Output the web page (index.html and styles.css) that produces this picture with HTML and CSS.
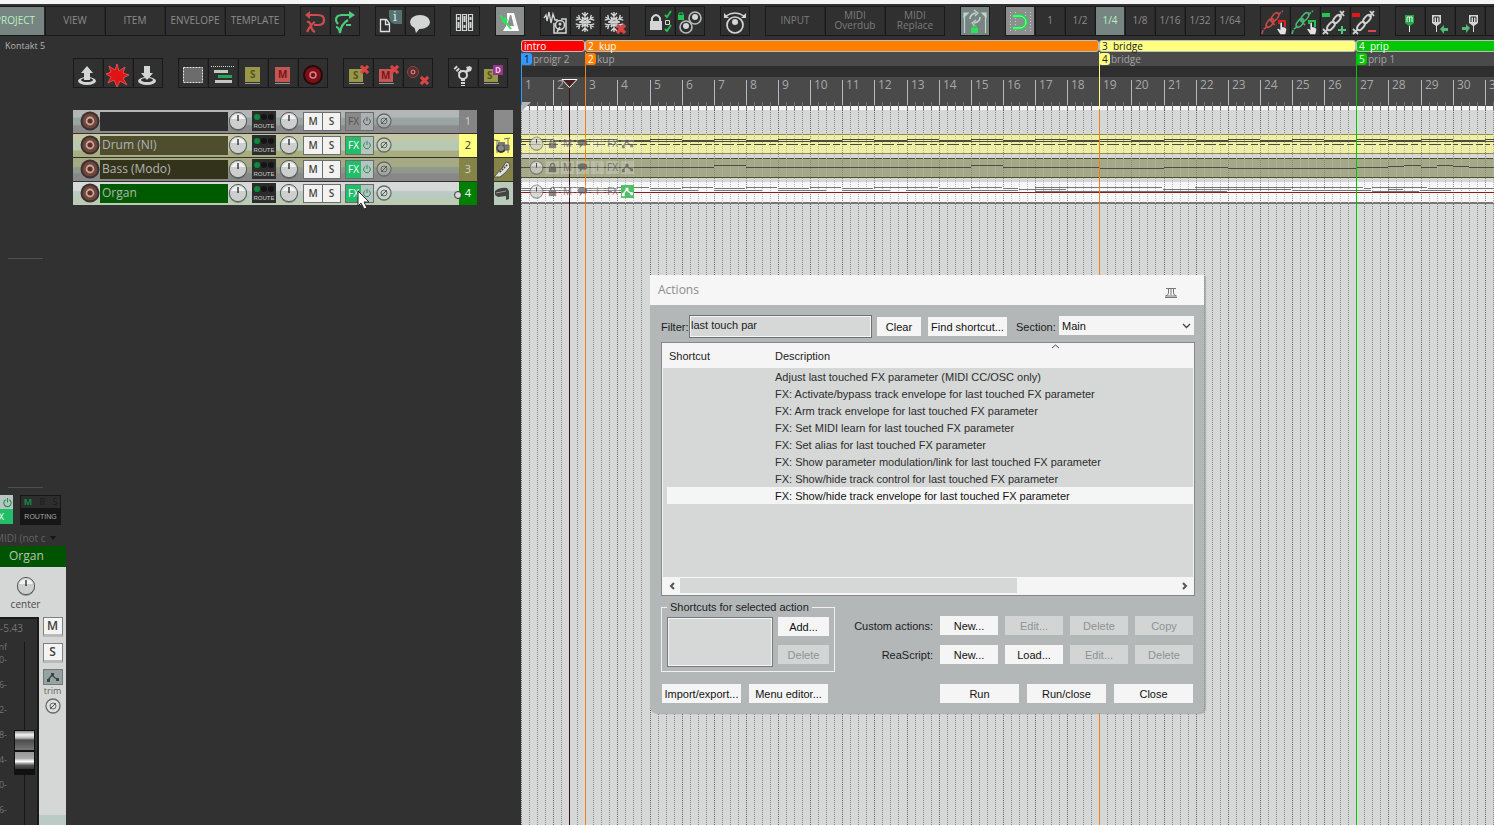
FILE: index.html
```html
<!DOCTYPE html>
<html lang="en">
<head>
    <meta charset="UTF-8">
    <meta name="viewport" content="width=device-width, initial-scale=1.0">
    <title>Reaper</title>
    <link rel="stylesheet" href="styles.css">
</head>
<body>
    <svg class="defs" aria-hidden="true">
        <symbol id="snow" viewBox="0 0 30 30">
            <g id="flake" stroke="#d4d6d6" stroke-width="1.4" fill="none">
                <g id="arm"><path d="M15 15V5M12 6l3 3 3-3M12 10l3 3 3-3"/></g>
                <use href="#arm" transform="rotate(60 15 15)"/>
                <use href="#arm" transform="rotate(120 15 15)"/>
                <use href="#arm" transform="rotate(180 15 15)"/>
                <use href="#arm" transform="rotate(240 15 15)"/>
                <use href="#arm" transform="rotate(300 15 15)"/>
            </g>
        </symbol>
        <symbol id="cross" viewBox="0 0 10 10">
            <path d="M1 1l8 8M9 1l-8 8" stroke="#d94545" stroke-width="3.4"/>
        </symbol>
        <symbol id="chain" viewBox="0 0 30 30">
            <path d="M2 27c1-5 3-6 6-8M18 8c2-2 3-3 5-4" fill="none" stroke="currentColor" stroke-width="1.6" stroke-dasharray="4 1"/>
            <g fill="none" stroke="currentColor" stroke-width="1.6">
                <ellipse cx="10" cy="16" rx="5" ry="2.6" transform="rotate(-50 10 16)"/>
                <ellipse cx="15" cy="10" rx="5" ry="2.6" transform="rotate(-50 15 10)"/>
                <path d="M9 12l6 6"/>
            </g>
        </symbol>
        <symbol id="chain2" viewBox="0 0 30 30">
            <path d="M3 27l5-5M24 4l-5 6M3 22l5 5M20 4l4 5" fill="none" stroke="#cfd1d1" stroke-width="1.8"/>
            <g fill="none" stroke="#cfd1d1" stroke-width="2">
                <ellipse cx="11" cy="19" rx="5" ry="2.6" transform="rotate(-50 11 19)"/>
                <ellipse cx="17" cy="12" rx="5" ry="2.6" transform="rotate(-50 17 12)"/>
            </g>
        </symbol>
        <symbol id="hand" viewBox="0 0 12 16">
            <path d="M4 1q1-1 2 0v5l4 1q2 1 1 4l-1 4H4L0 9q1-2 4 1z" fill="#e2e4e4"/>
        </symbol>
        <symbol id="knob" viewBox="0 0 20 20">
            <circle cx="10" cy="11" r="9" fill="#222" opacity=".4"/>
            <circle cx="10" cy="10" r="8.6" fill="#cdcfcf" stroke="#5c5c5c"/>
            <path d="M3 8a7.500 7.500 0 0 1 14 0z" fill="#f0f1f1"/>
            <path d="M10 4v6" stroke="#222" stroke-width="1.3"/>
        </symbol>
        <symbol id="phase" viewBox="0 0 18 18">
            <circle cx="9" cy="9" r="7" fill="#fff" fill-opacity=".2" stroke="#686b6b" stroke-width="1.300"/>
            <circle cx="9" cy="9" r="3" fill="none" stroke="#666"/>
            <path d="M6 12l6-6" stroke="#555"/>
        </symbol>
        <symbol id="rec" viewBox="0 0 20 20">
            <circle cx="10" cy="10" r="9.500" fill="#3b3030"/>
            <circle cx="10" cy="10" r="7.500" fill="#70463a"/>
            <circle cx="10" cy="10" r="3.500" fill="#5a3028" stroke="#c8a89c" stroke-width="1.800"/>
        </symbol>
        <symbol id="power" viewBox="0 0 12 12">
            <path d="M4 3a4 4 0 1 0 4 0M6 1v5" fill="none" stroke="currentColor" stroke-width="1.200"/>
        </symbol>
        <symbol id="env" viewBox="0 0 14 14">
            <path d="M2 10l4-5 3 3 3 1" fill="none" stroke="currentColor" stroke-width="1.300"/>
            <path d="M1 9h3v3H1zM5 3h3v3H5zM10 8h3v3h-3z" fill="currentColor"/>
        </symbol>
        <symbol id="lock" viewBox="0 0 14 14">
            <path d="M3 6h8v6H3z" fill="currentColor"/>
            <path d="M5 6V4q2-3 4 0v2" fill="none" stroke="currentColor" stroke-width="1.500"/>
        </symbol>
        <symbol id="bubble" viewBox="0 0 14 14">
            <path d="M2 4q5-3 10 0v4q-2 2-5 1l-3 3V9Q1 8 2 4z" fill="currentColor"/>
        </symbol>
    </svg>

    <div class="strip"></div>

    <header class="toolbar">
        <div class="group group-wide">
            <button class="tool tool-on">PROJECT</button>
            <button class="tool">VIEW</button>
            <button class="tool">ITEM</button>
            <button class="tool">ENVELOPE</button>
            <button class="tool">TEMPLATE</button>
        </div>
        <div class="group">
            <button class="tool" aria-label="Undo">
                <svg viewBox="0 0 30 30" fill="none" stroke="#d04c4c" stroke-width="2.200"><path d="M9 8h9q6 0 6 5t-6 5h-4"/><path d="M10 4L5 8l5 4z" fill="#d04c4c" stroke="none"/><path d="M7 15q3-1 4 4t4 6M15 15q-4 2-8 10"/></svg>
            </button>
            <button class="tool" aria-label="Redo">
                <svg viewBox="0 0 30 30" fill="none" stroke="#4fcb7c" stroke-width="2.200"><path d="M20 8h-8q-6 0-6 5 0 2 2 4"/><path d="M19 4l6 4-6 4z" fill="#4fcb7c" stroke="none"/><path d="M6 20q3 0 4 6 1-9 8-13M16 18h5"/></svg>
            </button>
        </div>
        <div class="group">
            <button class="tool" aria-label="Project info">
                <svg viewBox="0 0 30 30"><path d="M5.500 12.500h6l3 4v8h-9zM10.500 12.500v5h4" fill="none" stroke="#e0e2e2" stroke-width="1.300"/><path d="M14 3h13v14h-7q-6-1-6-8z" fill="#567172"/><text x="18" y="14" class="glyph-i">i</text></svg>
            </button>
            <button class="tool" aria-label="Notes">
                <svg viewBox="0 0 30 30"><ellipse cx="15" cy="15" rx="10" ry="7" fill="#d4d6d6"/><path d="M9 19l2 7 5-6z" fill="#d4d6d6"/></svg>
            </button>
        </div>
        <div class="group">
            <button class="tool" aria-label="Mixer">
                <svg viewBox="0 0 30 30" fill="none" stroke="#d4d6d6" stroke-width="1.200"><path d="M6.500 7.500h4v16h-4zM12.500 7.500h4v16h-4zM18.500 7.500h4v16h-4z"/><path d="M8.500 10v3M8.500 15v6M14.500 9v6M14.500 18v3M20.500 10v3M20.500 15v6" stroke-width="2"/></svg>
            </button>
        </div>
        <div class="group">
            <button class="tool tool-lit" aria-label="Metronome">
                <svg viewBox="0 0 30 30"><path d="M12 6h7l5 18H8l3-5 1-6z" fill="#fff"/><path d="M15 8h3l3 11h-9z" fill="#8b8f8e"/><path d="M5 8l11 14" stroke="#2fe05a" stroke-width="2"/><path d="M6 14l4-4 3 3-3 4z" fill="#2fe05a"/><path d="M17 7l3 12" stroke="#fff" stroke-width="2"/></svg>
            </button>
        </div>
        <div class="group">
            <button class="tool" aria-label="Render">
                <svg viewBox="0 0 30 30"><path d="M4 11l2-3 1 6 2-9 2 11 2-9 2 6h3" fill="none" stroke="#d4d6d6" stroke-width="1.300"/><path d="M14 16v10h12V12h-5" fill="none" stroke="#d4d6d6" stroke-width="1.500"/><circle cx="20" cy="18" r="4.500" fill="#2e2e2e" stroke="#d4d6d6" stroke-width="1.500"/><circle cx="20" cy="17" r="1.500" fill="#d4d6d6"/><path d="M17 25l3-5" stroke="#d4d6d6" stroke-width="1.500"/></svg>
            </button>
            <button class="tool" aria-label="Freeze"><svg viewBox="0 0 30 30"><use href="#snow"/></svg></button>
            <button class="tool" aria-label="Unfreeze"><svg viewBox="0 0 30 30"><use href="#snow" x="-1"/><use href="#cross" x="16" y="17" width="10" height="10"/></svg></button>
        </div>
        <div class="group">
            <button class="tool" aria-label="Lock settings">
                <svg viewBox="0 0 30 30"><path d="M5 14h12v9H5z" fill="#d4d6d6"/><path d="M7 14v-3q4-6 8 0v3" fill="none" stroke="#d4d6d6" stroke-width="2"/><path d="M20 8l2 2 4-6M20 22l2 2 4-6" fill="none" stroke="#23c552" stroke-width="1.800"/><path d="M20.500 13.500h4v4h-4z" fill="none" stroke="#d4d6d6"/></svg>
            </button>
            <button class="tool" aria-label="Grouping">
                <svg viewBox="0 0 30 30"><g fill="none" stroke="#b9bcbc" stroke-width="1.600"><circle cx="20" cy="11" r="6"/><circle cx="11" cy="20" r="6"/></g><circle cx="20" cy="10" r="3" fill="#d4d6d6"/><circle cx="11" cy="19" r="3" fill="#d4d6d6"/><path d="M3 8h6v5H3z" fill="#23c552"/><path d="M4 8V6h4v2" fill="none" stroke="#23c552"/></svg>
            </button>
        </div>
        <div class="group">
            <button class="tool" aria-label="Master">
                <svg viewBox="0 0 30 30"><circle cx="15" cy="18" r="8" fill="none" stroke="#d4d6d6" stroke-width="1.700"/><circle cx="15" cy="15" r="3" fill="#d4d6d6"/><path d="M6 9q9-6 18 0" fill="none" stroke="#d4d6d6" stroke-width="1.300"/><path d="M4 6v5h5zM26 6v5h-5z" fill="#d4d6d6"/></svg>
            </button>
        </div>
        <div class="group group-wide group-dim">
            <button class="tool">INPUT</button>
            <button class="tool">MIDI<br>Overdub</button>
            <button class="tool">MIDI<br>Replace</button>
        </div>
        <div class="group">
            <button class="tool tool-on" aria-label="Loop lock">
                <svg viewBox="0 0 30 30" fill="none" stroke="#c4d0ce" stroke-width="1.200"><path d="M4.500 26V7M25.500 26V7"/><path d="M4 6h4l-4 4zM26 6h-4l4 4z" fill="#c4d0ce"/><path d="M10 12q0-5 6-6M20 10q0 5-6 6" stroke-width="1.600"/><path d="M14 3l4 3-3 3M16 13l-4 3 3 3"/><path d="M11 21h7v5h-7z" fill="#2fe05a" stroke="none"/><path d="M13 21v-2h3v2" stroke="#2fe05a"/></svg>
            </button>
        </div>
        <div class="group">
            <button class="tool tool-lit" aria-label="Snap">
                <svg viewBox="0 0 30 30" fill="none"><path d="M5.500 5v21M10.500 5v21M20.500 5v21M25.500 5v21" stroke="#c8cccb" stroke-dasharray="1 2"/><path d="M8 9h7a6 6 0 0 1 0 12H8" stroke="#27d34f" stroke-width="4"/><path d="M8 9h7a6 6 0 0 1 0 12H8" stroke="#a9f7ba"/></svg>
            </button>
            <button class="tool">1</button>
            <button class="tool">1/2</button>
            <button class="tool tool-on">1/4</button>
            <button class="tool">1/8</button>
            <button class="tool">1/16</button>
            <button class="tool">1/32</button>
            <button class="tool">1/64</button>
        </div>
        <div class="group">
            <button class="tool red" aria-label="Unlink"><svg viewBox="0 0 30 30"><use href="#chain"/><path d="M19 17v-3h6v6" fill="none" stroke="#e02020" stroke-width="2"/><use href="#hand" x="17" y="15" width="10" height="13"/></svg></button>
            <button class="tool green" aria-label="Link"><svg viewBox="0 0 30 30"><use href="#chain"/><path d="M19 17v-3h6v6" fill="none" stroke="#23c552" stroke-width="2"/><use href="#hand" x="17" y="15" width="10" height="13"/></svg></button>
            <button class="tool" aria-label="Add link"><svg viewBox="0 0 30 30"><use href="#chain2"/><path d="M2 6h8v4H2z" fill="#23c552"/><path d="M22 19v8M18 23h8" stroke="#53c27c" stroke-width="2"/></svg></button>
            <button class="tool" aria-label="Remove link"><svg viewBox="0 0 30 30"><use href="#chain2"/><path d="M2 6h8v4H2z" fill="#e01818"/><path d="M18 24h8" stroke="#d04c4c" stroke-width="2"/></svg></button>
        </div>
        <div class="group">
            <button class="tool" aria-label="Marker"><svg viewBox="0 0 30 30"><path d="M10 8h9v8l-4 3h-1l-4-3z" fill="#23a849"/><path d="M12 15v-5h5v5M14.500 10v5M14.500 19v6" fill="none" stroke="#e8f5ea"/></svg></button>
            <button class="tool" aria-label="Previous marker"><svg viewBox="0 0 30 30"><path d="M7 8h9v8l-4 3h-1l-4-3z" fill="#d4d6d6"/><path d="M9 15v-5h5v5M11.500 10v5" fill="none" stroke="#2e2e2e"/><path d="M11.500 19v6" stroke="#d4d6d6"/><path d="M15 22l4-4v3h4v3h-4v3z" fill="#53b878"/></svg></button>
            <button class="tool" aria-label="Next marker"><svg viewBox="0 0 30 30"><path d="M14 8h9v8l-4 3h-1l-4-3z" fill="#d4d6d6"/><path d="M16 15v-5h5v5M18.500 10v5" fill="none" stroke="#2e2e2e"/><path d="M18.500 19v6" stroke="#d4d6d6"/><path d="M15 21l-4-4v3H7v3h4v3z" fill="#53b878"/></svg></button>
            <button class="tool" aria-label="Options"></button>
        </div>
    </header>

    <main class="work">
        <aside class="side">
            <p class="status">Kontakt 5</p>
            <div class="divider divider-top"></div>
            <div class="divider divider-bottom"></div>

            <div class="mixer">
                <div class="mixer-io">
                    <div class="mixer-fx">
                        <button class="mixer-power" aria-label="FX bypass"><svg viewBox="0 0 12 12"><use href="#power"/></svg></button>
                        <button class="mixer-fxbtn">FX</button>
                    </div>
                    <button class="routing"><span class="routing-led"><b>M</b> R S</span><span class="routing-name">ROUTING</span></button>
                </div>
                <p class="midi-in"><span>MIDI (not c</span> <i></i></p>
                <p class="mixer-name">Organ</p>
                <div class="pan">
                    <svg class="knob" viewBox="0 0 20 20"><use href="#knob"/></svg>
                    <p>center</p>
                </div>
                <div class="strip-body">
                    <div class="fader">
                        <p class="db">-5.43</p>
                        <div class="fader-row">
                            <ul class="scale"><li>-inf</li><li>0-</li><li>6-</li><li>12-</li><li>18-</li><li>24-</li><li>30-</li><li>36-</li></ul>
                            <input class="volume" type="range" min="0" max="100" value="36" aria-label="Volume">
                        </div>
                    </div>
                    <div class="strip-btns">
                        <button class="ms">M</button>
                        <button class="ms">S</button>
                        <button class="trim" aria-label="Envelope"><svg viewBox="0 0 14 14"><use href="#env"/></svg></button>
                        <span class="trim-name">trim</span>
                        <svg class="phase" viewBox="0 0 18 18"><use href="#phase"/></svg>
                    </div>
                </div>
            </div>
        </aside>

        <section class="tcp">
            <div class="toolbar2">
                <div class="group">
                    <button class="tool" aria-label="Upload"><svg viewBox="0 0 30 30"><ellipse cx="14" cy="22" rx="9" ry="4" fill="#d4d6d6"/><ellipse cx="14" cy="21" rx="6" ry="2" fill="#2e2e2e"/><path d="M11 21v-7H8l6-7 6 7h-3v7z" fill="#d4d6d6"/></svg></button>
                    <button class="tool" aria-label="Explode"><svg viewBox="0 0 30 30"><path d="M14 5l2 7 6-4-2 6 6 2-6 3 4 7-7-4-3 6-3-7-6 3 3-6-5-3 5-2-2-6 6 4z" fill="#e01414" stroke="#e05050"/></svg></button>
                    <button class="tool" aria-label="Download"><svg viewBox="0 0 30 30"><ellipse cx="14" cy="22" rx="9" ry="4" fill="#d4d6d6"/><ellipse cx="14" cy="21" rx="6" ry="2" fill="#2e2e2e"/><path d="M11 7h6v7h3l-6 7-6-7h3z" fill="#d4d6d6"/></svg></button>
                </div>
                <div class="group">
                    <button class="tool" aria-label="Select"><svg viewBox="0 0 30 30"><path d="M5.500 8.500h19v15h-19z" fill="#6c6c6c" stroke="#e8eaea" stroke-dasharray="2 1"/></svg></button>
                    <button class="tool" aria-label="Ripple"><svg viewBox="0 0 30 30"><path d="M3 7.500h24" stroke="#d4d6d6" stroke-dasharray="1 1"/><path d="M6 12.500h14M7 22.500h17" stroke="#c3c6c6" stroke-width="3"/><path d="M10 17.500h14" stroke="#23a552" stroke-width="3"/></svg></button>
                    <button class="tool" aria-label="Solo"><svg viewBox="0 0 30 30"><path d="M7 8h15v15H7z" fill="#99984a"/><path d="M7 24.500h15" stroke="#999"/><text x="12" y="19" class="glyph-s">S</text></svg></button>
                    <button class="tool" aria-label="Mute"><svg viewBox="0 0 30 30"><path d="M7 8h15v15H7z" fill="#c45656"/><path d="M7 24.500h15" stroke="#999"/><text x="10" y="19" class="glyph-m">M</text></svg></button>
                    <button class="tool" aria-label="Record"><svg viewBox="0 0 30 30"><circle cx="15" cy="16" r="10" fill="#260909"/><circle cx="15" cy="16" r="8" fill="#7c1018"/><circle cx="15" cy="16" r="3" fill="none" stroke="#d98088" stroke-width="1.500"/></svg></button>
                </div>
                <div class="group">
                    <button class="tool" aria-label="Clear solo"><svg viewBox="0 0 30 30"><path d="M6 10h14v13H6z" fill="#99984a"/><path d="M6 24.500h15" stroke="#999"/><text x="10" y="20" class="glyph-s">S</text><use href="#cross" x="17" y="6" width="9" height="9"/></svg></button>
                    <button class="tool" aria-label="Clear mute"><svg viewBox="0 0 30 30"><path d="M6 10h14v13H6z" fill="#c45656"/><path d="M6 24.500h15" stroke="#999"/><text x="8" y="20" class="glyph-m">M</text><use href="#cross" x="17" y="6" width="9" height="9"/></svg></button>
                    <button class="tool" aria-label="Clear record"><svg viewBox="0 0 30 30"><circle cx="10" cy="13" r="5.500" fill="#5c2a2a" stroke="#8e4848"/><circle cx="10" cy="13" r="2" fill="none" stroke="#d9a0a0"/><use href="#cross" x="17" y="17" width="9" height="9"/></svg></button>
                </div>
                <div class="group">
                    <button class="tool" aria-label="Monitor"><svg viewBox="0 0 30 30"><circle cx="15" cy="16" r="4" fill="none" stroke="#d4d6d6" stroke-width="2"/><path d="M7 8l5 5M15 20v7" stroke="#d4d6d6" stroke-width="4" stroke-dasharray="2 1"/><path d="M17 12l2-2-1-2 4-1 2 2-1 3-3 1-1 1z" fill="#d4d6d6"/></svg></button>
                    <button class="tool" aria-label="Solo defeat"><svg viewBox="0 0 30 30"><path d="M6 10h14v13H6z" fill="#99984a"/><path d="M6 24.500h15" stroke="#999"/><text x="9" y="20" class="glyph-s">S</text><path d="M15 6h10v10H15z" fill="#96368a"/><text x="17" y="14" class="glyph-d">D</text></svg></button>
                </div>
            </div>
            <div class="tracks" id="tracks"></div>
        </section>

        <section class="arrange" id="arrange">
            <div class="regions" id="regions"></div>
            <div class="markers" id="markers"></div>
            <div class="ruler-gap"></div>
            <div class="ruler" id="ruler"></div>
            <div class="lanes">
                <div class="lane"></div>
                <div class="lane lane-drum"></div>
                <div class="lane lane-bass"></div>
                <div class="lane lane-organ"></div>
            </div>
            <svg class="grid" id="grid" aria-hidden="true"></svg>
            <div class="lane-tools" id="laneTools"></div>
        </section>
    </main>

    <div class="actions" role="dialog" aria-labelledby="actionsTitle">
        <div class="actions-title">
            <span id="actionsTitle">Actions</span>
            <svg class="pin" viewBox="0 0 14 12" fill="none" stroke="#777"><path d="M2 1.500h10M1 10.500h12M4.500 2v4q0 2-3 3h11q-3-1-3-3V2M7 2v6"/></svg>
        </div>
        <div class="actions-body">
            <div class="filter-row">
                <label for="filter">Filter:</label>
                <input id="filter" class="filter" type="text" value="last touch par">
                <button class="btn btn-clear">Clear</button>
                <button class="btn btn-find">Find shortcut...</button>
                <label class="section-label" for="section">Section:</label>
                <select id="section" class="section"><option>Main</option></select>
            </div>

            <div class="list">
                <svg class="sort" viewBox="0 0 9 5"><path d="M1 4l3.500-3L8 4" fill="none" stroke="#444"/></svg>
                <table>
                    <thead>
                        <tr><th class="col-key">Shortcut</th><th>Description</th></tr>
                    </thead>
                    <tbody>
                        <tr><td></td><td>Adjust last touched FX parameter (MIDI CC/OSC only)</td></tr>
                        <tr><td></td><td>FX: Activate/bypass track envelope for last touched FX parameter</td></tr>
                        <tr><td></td><td>FX: Arm track envelope for last touched FX parameter</td></tr>
                        <tr><td></td><td>FX: Set MIDI learn for last touched FX parameter</td></tr>
                        <tr><td></td><td>FX: Set alias for last touched FX parameter</td></tr>
                        <tr><td></td><td>FX: Show parameter modulation/link for last touched FX parameter</td></tr>
                        <tr><td></td><td>FX: Show/hide track control for last touched FX parameter</td></tr>
                        <tr class="selected"><td></td><td>FX: Show/hide track envelope for last touched FX parameter</td></tr>
                    </tbody>
                </table>
                <div class="hscroll">
                    <button aria-label="Scroll left"><svg viewBox="0 0 8 10"><path d="M6 2L3 5l3 3" fill="none" stroke="#555" stroke-width="2"/></svg></button>
                    <div class="hscroll-track"><div class="hscroll-thumb"></div></div>
                    <button aria-label="Scroll right"><svg viewBox="0 0 8 10"><path d="M2 2l3 3-3 3" fill="none" stroke="#555" stroke-width="2"/></svg></button>
                </div>
            </div>

            <div class="bottom">
                <fieldset class="shortcuts">
                    <legend>Shortcuts for selected action</legend>
                    <div class="shortcut-list"></div>
                    <div class="shortcut-btns">
                        <button class="btn">Add...</button>
                        <button class="btn" disabled>Delete</button>
                    </div>
                </fieldset>
                <div class="custom">
                    <span>Custom actions:</span>
                    <button class="btn">New...</button>
                    <button class="btn" disabled>Edit...</button>
                    <button class="btn" disabled>Delete</button>
                    <button class="btn" disabled>Copy</button>
                    <span>ReaScript:</span>
                    <button class="btn">New...</button>
                    <button class="btn">Load...</button>
                    <button class="btn" disabled>Edit...</button>
                    <button class="btn" disabled>Delete</button>
                </div>
            </div>

            <div class="footer">
                <button class="btn">Import/export...</button>
                <button class="btn">Menu editor...</button>
                <button class="btn btn-run">Run</button>
                <button class="btn">Run/close</button>
                <button class="btn">Close</button>
            </div>
        </div>
    </div>

    <svg class="cursor" viewBox="0 0 13 20"><path d="M1 1v15l3-3 3 6 3-1-3-6h5z" fill="#fff" stroke="#222"/></svg>

    <script src="script.js"></script>
</body>
</html>
```

FILE: styles.css
```css
*{
    box-sizing: border-box;
    margin: 0;
    padding: 0;
}
body{
    display: flex;
    flex-direction: column;
    height: 100vh;
    overflow: hidden;
    background-color: #313131;
    color: #b4b4b4;
    font-family: "Open Sans", "Noto Sans", sans-serif;
    font-size: 11px;
}
button{
    border: none;
    font-family: inherit;
    color: inherit;
}
.defs{
    position: absolute;
    width: 0;
    height: 0;
}
.strip{
    height: 4px;
    background-color: #f5f5f5;
    flex-shrink: 0;
}

/* toolbars */
.toolbar{
    display: flex;
    flex-shrink: 0;
    gap: 15px;
    height: 36px;
    padding-top: 2px;
    margin-left: -15px;
}
.toolbar2{
    display: flex;
    gap: 15px;
    padding-top: 18px;
    margin-bottom: 22px;
}
.group{
    display: flex;
    flex-shrink: 0;
}
.tool{
    width: 30px;
    height: 30px;
    flex-shrink: 0;
    border: 1px solid #191919;
    border-right-color: #282828;
    background-color: #303030;
    color: #8c8c8c;
    font-size: 10px;
    line-height: 10px;
    white-space: nowrap;
    padding-bottom: 3px;
}
.tool:last-child{
    border-right-color: #191919;
}
.tool svg{
    display: block;
    width: 30px;
    height: 30px;
    margin: 0 -1px -2px;
}
.group-wide .tool{
    width: 60px;
}
.group-dim .tool{
    color: #7c7c7c;
}
.tool-on{
    background-color: #768482;
    color: #b9f0bf;
}
.tool-lit{
    background-color: #8b8f8e;
}
.red{
    color: #c44a4a;
}
.green{
    color: #4db574;
}
.glyph-i{
    font: 12px "DejaVu Serif", serif;
    fill: #e0eaea;
}
.glyph-s{
    font: bold 10px "Open Sans", sans-serif;
    fill: #54541a;
}
.glyph-m{
    font: bold 10px "Open Sans", sans-serif;
    fill: #7c1616;
}
.glyph-d{
    font: bold 8px "Open Sans", sans-serif;
    fill: #f0c8ec;
}

.work{
    display: flex;
    flex: 1;
    min-height: 0;
}

/* side panel */
.side{
    width: 66px;
    flex-shrink: 0;
    display: flex;
    flex-direction: column;
}
.status{
    padding-left: 5px;
    font-size: 9px;
    line-height: 12px;
    white-space: nowrap;
}
.divider{
    width: 35px;
    height: 1px;
    margin-left: 8px;
    background-color: #4e4e4e;
}
.divider-top{
    margin-top: 206px;
}
.divider-bottom{
    margin-top: auto;
}
.mixer{
    margin-top: 7px;
    height: 330px;
    flex-shrink: 0;
    overflow: hidden;
    display: flex;
    flex-direction: column;
}
.mixer-io, .midi-in, .mixer-name, .pan{
    flex-shrink: 0;
}
.mixer-io{
    display: flex;
    gap: 7px;
    height: 30px;
}
.mixer-fx{
    width: 13px;
    overflow: hidden;
}
.mixer-fx button{
    display: flex;
    justify-content: flex-end;
    align-items: center;
    width: 13px;
    height: 14px;
}
.mixer-power{
    background-color: #b5c6c0;
    color: #2b8a58;
}
.mixer-power svg{
    width: 11px;
    height: 11px;
}
.mixer-fx .mixer-fxbtn{
    height: 15px;
    background-color: #22bd68;
    color: #fff;
    font-size: 9px;
    padding-right: 9px;
}
.routing{
    width: 41px;
    background-color: #161616;
    display: flex;
    flex-direction: column;
    align-items: center;
    border: 1px solid #161616;
}
.routing-led{
    width: 100%;
    background-color: #2d2d2d;
    color: #1b1b1b;
    font-size: 9px;
    line-height: 12px;
    word-spacing: 5px;
}
.routing-led b{
    color: #108845;
}
.routing-name{
    font-family: "Liberation Sans", sans-serif;
    font-size: 7px;
    line-height: 18px;
    color: #a8a8a8;
}
.midi-in{
    display: flex;
    align-items: center;
    gap: 5px;
    height: 21px;
    padding-top: 4px;
    margin-left: -5px;
    font-size: 10px;
    color: #636363;
    white-space: nowrap;
}
.midi-in i{
    border: 3px solid transparent;
    border-top: 4px solid #161616;
    border-bottom: none;
}
.mixer-name{
    height: 21px;
    background-color: #005400;
    color: #b5c6b5;
    font-size: 12px;
    line-height: 20px;
    padding-left: 9px;
}
.pan{
    height: 50px;
    background-color: #d5d7d6;
    color: #4a4a4a;
    font-size: 10px;
    line-height: 14px;
    text-align: center;
    padding: 9px 15px 0 0;
}
.knob{
    display: block;
    width: 20px;
    height: 20px;
    flex-shrink: 0;
    margin: 0 auto 1px;
}
.strip-body{
    flex: 1;
    min-height: 0;
    display: flex;
    background-color: #d5d7d6;
}
.fader{
    width: 39px;
    overflow: hidden;
    background-color: #2f2f2f;
    border-top: 2px solid #191919;
    border-right: 2px solid #191919;
}
.db{
    font-size: 10px;
    line-height: 18px;
    color: #747474;
}
.fader-row{
    display: flex;
    gap: 7px;
}
.scale{
    display: flex;
    flex-direction: column;
    align-items: flex-end;
    width: 7px;
    overflow: hidden;
    list-style: none;
    font-size: 9px;
    line-height: 13px;
    white-space: nowrap;
    color: #747474;
    flex-shrink: 0;
}
.scale li{
    margin-top: 12px;
}
.scale li:first-child,
.scale li:nth-child(2){
    margin-top: 0;
}
.scale li:first-child{
    padding-top: 3px;
}
.volume{
    appearance: none;
    writing-mode: vertical-lr;
    direction: rtl;
    width: 21px;
    height: 183px;
    margin-top: 5px;
    background: linear-gradient(#161616, #161616) center / 1px 100% no-repeat;
}
.volume::-webkit-slider-thumb{
    appearance: none;
    width: 21px;
    height: 45px;
    border: 1px solid #111;
    border-bottom-width: 6px;
    background: linear-gradient(#888, #f2f2f2 10%, #bbb 18%, #4c4c4c 24%, #777 50%, #111 51%, #111 54%, #999 56%, #aaa 72%, #fff 80%, #555 90%, #333);
}
.strip-btns{
    flex: 1;
    display: flex;
    flex-direction: column;
    align-items: center;
    border-bottom: 10px solid #b9cbc4;
}
.ms{
    width: 20px;
    height: 20px;
    margin-bottom: 6px;
    border: 1px solid #808080;
    border-bottom: 3px solid #b9bbbb;
    background-color: #f4f4f4;
    color: #44403a;
    font-size: 12px;
    line-height: 14px;
    font-family: "Open Sans", sans-serif;
    font-weight: 600;
}
.trim{
    width: 20px;
    height: 16px;
    border: 1px solid #777;
    background-color: #97a3a3;
    color: #3c4444;
}
.trim svg{
    display: block;
    width: 14px;
    height: 14px;
    margin: auto;
}
.trim-name{
    font-size: 9px;
    line-height: 12px;
    color: #636363;
}
.phase{
    display: block;
    width: 18px;
    height: 18px;
    flex-shrink: 0;
}

/* tracks */
.tcp{
    width: 455px;
    flex-shrink: 0;
    padding-left: 7px;
}
.tracks{
    display: flex;
    flex-direction: column;
    gap: 1px;
}
.track{
    display: flex;
    height: 23px;
}
.track-panel{
    position: relative;
    display: flex;
    align-items: center;
    width: 386px;
    padding: 0 0 1px 7px;
    background: linear-gradient(#b2b6b6 0 30%, #98a5a3 36% 62%, #8b8b8b 70%);
}
.track-drum .track-panel{
    background: linear-gradient(#c5c8a2 0 20%, #b8c9b2 36% 68%, #aaad7e 76%);
}
.track-bass .track-panel{
    background: linear-gradient(#a6aa84 0 36%, #8f9a8b 42% 62%, #888 70%);
}
.track-organ .track-panel{
    background: linear-gradient(#d8dada 0 36%, #b9cbc4 42% 62%, #bccbb4 70%);
}
/* dot that marks the last touched track */
.track-organ .track-panel::after{
    content: "";
    position: absolute;
    right: -3px;
    top: 9px;
    width: 6px;
    height: 6px;
    border: 1px solid #333;
    border-radius: 50%;
    background-color: #d8dada;
}
.rec{
    width: 20px;
    height: 20px;
    flex-shrink: 0;
}
.track-name{
    width: 128px;
    height: 19px;
    padding-left: 2px;
    background-color: #2e2e2e;
    font-size: 12px;
    line-height: 18px;
}
.track-drum .track-name{
    background-color: #4e4e2e;
}
.track-bass .track-name{
    background-color: #33331c;
}
.track-organ .track-name{
    background-color: #005a00;
}
.track .knob{
    margin: 0;
}
.route{
    width: 24px;
    height: 20px;
    margin: 0 3px 0 4px;
    background-color: #2c2c2c;
    color: #d0d0d0;
    font-family: "Liberation Sans", sans-serif;
    font-size: 6px;
    line-height: 10px;
}
.route svg{
    display: block;
    width: 24px;
    height: 9px;
}
.pair{
    display: flex;
    height: 19px;
    border: 1px solid #6d6d6d;
    margin-left: 4px;
}
.pair button{
    width: 18px;
    background-color: #f2f2f2;
    color: #4a4638;
    font-family: "Open Sans", sans-serif;
    font-weight: 600;
    font-size: 10px;
    line-height: 15px;
}
.pair button + button{
    border-left: 1px solid #6d6d6d;
}
.pair .fx{
    width: 15px;
    background-color: #22bd68;
    color: #fff;
    font-weight: normal;
}
.pair .pw{
    width: 12px;
    border: none;
    background-color: #b5c6c0;
    color: #2b8a58;
}
.pair .pw svg{
    display: block;
    width: 10px;
    height: 10px;
    margin: auto;
}
.fx-off .fx{
    background-color: #8a8a8a;
    color: #555;
}
.fx-off .pw{
    background-color: #adb1b1;
    color: #555;
}
.track .phase{
    margin-left: 1px;
}
.track-num{
    width: 18px;
    background-color: #858585;
    color: #d0d0d0;
    font-size: 11px;
    line-height: 22px;
    text-align: center;
}
.track-drum .track-num{
    background-color: #ffff80;
    color: #333;
}
.track-bass .track-num{
    background-color: #848447;
}
.track-organ .track-num{
    background-color: #008000;
    color: #fff;
}
.track-icon{
    width: 19px;
    height: 23px;
    margin-left: 17px;
    background-color: #8b8b8b;
}
.track-drum .track-icon{
    background-color: #ffff80;
}
.track-bass .track-icon{
    background-color: #848447;
}
.track-organ .track-icon{
    background-color: #b9cbb9;
}

/* arrange view */
.arrange{
    position: relative;
    flex: 1;
    min-width: 0;
    overflow: hidden;
    display: flex;
    flex-direction: column;
    background-color: #d6d8d7;
}
.regions, .markers{
    display: flex;
    flex-shrink: 0;
    height: 13px;
    background-color: #4a4a4a;
    line-height: 12px;
    white-space: pre;
}
.region{
    flex-shrink: 0;
    height: 12px;
    border: 1px solid #bdbdbd;
    border-radius: 3px;
    padding-left: 2px;
    color: #fff;
    font-size: 10px;
    line-height: 11px;
}
.region:last-child{
    flex: 1;
    border-right: none;
    border-radius: 3px 0 0 3px;
}
.region-red{
    background-color: #ff0000;
}
.region-orange{
    background-color: #ff8000;
}
.region-yellow{
    background-color: #ffff80;
    color: #222;
}
.region-green{
    background-color: #00c800;
}
.marker{
    flex-shrink: 0;
    font-size: 10px;
    color: #a4a4a4;
}
.marker b{
    display: inline-block;
    width: 11px;
    height: 12px;
    border-radius: 3px;
    padding-left: 3px;
    margin-right: 1px;
    font-weight: normal;
    color: #fff;
}
.marker .blue{
    background-color: #3399ff;
    color: #111;
}
.marker .yellow{
    background-color: #ffff80;
    color: #222;
}
.marker .orange{
    background-color: #ff8000;
}
.marker .lime{
    background-color: #00c800;
}
.ruler-gap{
    flex-shrink: 0;
    height: 11px;
    background-color: #2e2e2e;
}
.ruler{
    display: flex;
    flex-shrink: 0;
    height: 33px;
    background-color: #4a4a4a;
    border-bottom: 4px solid #f5f5f5;
    color: #a8a8a8;
    font-size: 12px;
    line-height: 16px;
}
.bar{
    flex-shrink: 0;
    padding-left: 4px;
}
.lanes{
    display: flex;
    flex-direction: column;
    gap: 4px;
}
.lane{
    height: 20px;
}
.lane-drum, .lane-bass{
    border-top: 1px solid #8d8d50;
    border-bottom: 1px solid #8d8d50;
    background-color: rgba(255, 255, 130, 0.6);
}
.lane-bass{
    border-color: #50502f;
    background-color: rgba(132, 138, 81, 0.6);
}
.lane-organ{
    height: 22px;
    border-bottom: 2px solid #777;
    background-color: rgba(255, 255, 255, 0.8);
}
.grid{
    position: absolute;
    left: 0;
    top: 0;
    width: 100%;
    height: 100%;
}
.lane-tools{
    position: absolute;
    left: 8px;
    top: 97px;
    display: flex;
    flex-direction: column;
    gap: 11px;
}
.lane-row{
    display: flex;
    gap: 2px;
    height: 13px;
    color: #5c5c5c;
    font-size: 10px;
    line-height: 13px;
    text-align: center;
}
.lane-row span, .lane-row svg{
    width: 13px;
    height: 13px;
    background-color: rgba(255, 255, 255, 0.3);
    opacity: 0.7;
}
.lane-row .lane-knob{
    width: 15px;
    height: 15px;
    margin-top: -1px;
    background: none;
}
.lane-row .lane-env{
    background-color: #4fc068;
    color: #fff;
    opacity: 1;
}

/* actions window */
.actions{
    position: absolute;
    left: 650px;
    top: 275px;
    width: 554px;
    background-color: #b3b7b8;
    color: #1c1c1c;
    font-family: "Liberation Sans", Arial, sans-serif;
    font-size: 11px;
    border-radius: 0 0 6px 6px;
    box-shadow: 2px 1px 1px rgba(150, 155, 155, 0.7);
}
.actions-title{
    display: flex;
    justify-content: space-between;
    align-items: center;
    height: 30px;
    padding: 0 26px 1px 8px;
    background-color: #f6f6f6;
    color: #8c8c8c;
    font-family: "Open Sans", sans-serif;
    font-size: 12px;
}
.pin{
    width: 14px;
    height: 12px;
    margin-top: 6px;
}
.actions-body{
    padding: 10px 10px 10px 11px;
}
.filter-row{
    display: flex;
    align-items: center;
    height: 23px;
    margin-bottom: 4px;
}
.filter{
    width: 183px;
    height: 23px;
    margin: 0 5px 0 3px;
    padding: 0 1px 3px;
    border: 1px solid #6e7171;
    outline: 1px solid #f6f6f6;
    outline-offset: -2px;
    background-color: #d6d8d7;
    color: #222;
    font: inherit;
}
.filter-row label{
    width: 25px;
}
.btn{
    height: 19px;
    background-color: #f5f5f5;
    color: #111;
    font-size: 11px;
    white-space: nowrap;
}
.btn:disabled{
    background-color: #d2d5d4;
    color: #8f9292;
}
.btn-clear{
    width: 44px;
    margin-right: 7px;
}
.btn-find{
    width: 79px;
    margin-right: 9px;
}
.filter-row .section-label{
    width: 43px;
}
.section{
    flex: 1;
    height: 19px;
    margin-bottom: 2px;
    appearance: none;
    border: none;
    padding-left: 3px;
    background-color: #f5f5f5;
    background-image: url("data:image/svg+xml,%3Csvg xmlns='http://www.w3.org/2000/svg' width='9' height='6'%3E%3Cpath d='M1 1l3.500 3.500L8 1' fill='none' stroke='%23444' stroke-width='1.300'/%3E%3C/svg%3E");
    background-repeat: no-repeat;
    background-position: right 3px center;
    color: #111;
    font: inherit;
}
.list{
    position: relative;
    display: flex;
    flex-direction: column;
    height: 254px;
    border: 1px solid #858888;
    outline: 1px solid #f5f5f5;
    outline-offset: -2px;
    background-color: #d6d8d7;
    padding: 1px;
    margin-right: -1px;
}
.sort{
    position: absolute;
    left: 389px;
    top: 1px;
    width: 9px;
    height: 5px;
}
.list table{
    width: 100%;
    border-collapse: collapse;
    text-align: left;
}
.list th{
    height: 24px;
    background-color: #f5f5f5;
    font-weight: normal;
}
.list th.col-key{
    width: 112px;
    padding-left: 6px;
}
.list td{
    height: 17px;
    color: #2c2c2c;
}
.list .selected td{
    background-color: #f5f5f5;
    color: #111;
}
.list .selected td:first-child{
    background: linear-gradient(90deg, #d6d8d7 4px, #f5f5f5 4px);
}
.hscroll{
    display: flex;
    align-items: center;
    height: 17px;
    margin-top: auto;
    background-color: #f5f5f5;
}
.hscroll button{
    width: 17px;
    height: 15px;
    background-color: #f5f5f5;
}
.hscroll svg{
    display: block;
    width: 8px;
    height: 10px;
    margin: auto;
}
.hscroll-track{
    flex: 1;
}
.hscroll-thumb{
    width: 68%;
    height: 15px;
    background-color: #d6d8d7;
}
.bottom{
    display: flex;
    justify-content: space-between;
    margin-top: 5px;
}
.shortcuts{
    display: flex;
    width: 174px;
    height: 71px;
    padding: 4px 5px;
    border: 1px solid #f0f0f0;
}
.shortcuts legend{
    padding: 0 3px;
    line-height: 12px;
}
.shortcut-list{
    width: 106px;
    height: 50px;
    border: 1px solid #777a7a;
    outline: 1px solid #f5f5f5;
    outline-offset: -2px;
    background-color: #d6d8d7;
    margin-right: 5px;
    flex-shrink: 0;
}
.shortcut-btns{
    flex: 1;
    display: flex;
    flex-direction: column;
    gap: 9px;
}
.custom{
    display: grid;
    grid-template-columns: auto repeat(4, 58px);
    gap: 10px 7px;
    align-content: start;
    align-items: center;
    padding: 15px 1px 0 0;
    text-align: right;
}
.footer{
    display: flex;
    gap: 8px;
    margin-top: 12px;
    padding: 0 1px;
}
.footer .btn{
    width: 79px;
}
.footer .btn-run{
    margin-left: auto;
}

.cursor{
    position: absolute;
    left: 357px;
    top: 190px;
    width: 13px;
    height: 20px;
}
```

FILE: script.js
```js
const BAR = 32.125;
const TOP = 40;

const tracks = [
    { name: '', cls: 'track-empty', fx: 'fx-off', icon: '' },
    { name: 'Drum (NI)', cls: 'track-drum', fx: '', icon: '<ellipse cx="7" cy="14" rx="5" ry="5" fill="#333"/><circle cx="7" cy="14" r="3" fill="#888"/><path d="M0 6l6 1M10 5l6-1M10 11h5v5h-4z" stroke="#666" fill="#777"/><path d="M3 7v12M14 5v14" stroke="#777"/><path d="M4 8h7v3H4z" fill="#777"/>' },
    { name: 'Bass (Modo)', cls: 'track-bass', fx: '', icon: '<path d="M0 19L9 9l3-5 3 1 1 4-5 6-5 4z" fill="#e0e0dc" stroke="#555"/><path d="M6 13l1 1M8 11l1 1M10 9l1 1M12 7l1 1" stroke="#444" stroke-width="2"/>' },
    { name: 'Organ', cls: 'track-organ', fx: '', icon: '<path d="M1 9q5-4 12-3l2 3v8l-3 1v-4l-8 1-3-2z" fill="#444"/><path d="M2 11l10-2" stroke="#999"/>' }
];

document.querySelector('#tracks').innerHTML = tracks.map((t, i) => `
    <div class="track ${t.cls}">
        <div class="track-panel">
            <svg class="rec" viewBox="0 0 20 20"><use href="#rec"/></svg>
            <span class="track-name">${t.name}</span>
            <svg class="knob" viewBox="0 0 20 20"><use href="#knob"/></svg>
            <button class="route"><svg viewBox="0 0 24 9"><circle cx="5" cy="5" r="3" fill="#0d8a3e"/><circle cx="12" cy="5" r="3" fill="#151515"/><circle cx="19" cy="5" r="3" fill="#151515"/></svg>ROUTE</button>
            <svg class="knob" viewBox="0 0 20 20"><use href="#knob"/></svg>
            <div class="pair"><button>M</button><button>S</button></div>
            <div class="pair ${t.fx}"><button class="fx">FX</button><button class="pw" aria-label="Bypass"><svg viewBox="0 0 12 12"><use href="#power"/></svg></button></div>
            <svg class="phase" viewBox="0 0 18 18"><use href="#phase"/></svg>
        </div>
        <div class="track-num">${i + 1}</div>
        <svg class="track-icon" viewBox="0 0 19 23">${t.icon}</svg>
    </div>`).join('');

// only draw as many bars as fit in the view
const BARS = Math.ceil(document.querySelector('#arrange').clientWidth / BAR);

// start and end are bar numbers
const regions = [
    { text: 'intro', start: 0, end: 2, cls: 'region-red' },
    { text: '2  kup', start: 2, end: 18, cls: 'region-orange' },
    { text: '3  bridge', start: 18, end: 26, cls: 'region-yellow' },
    { text: '4  prip', start: 26, end: 27, cls: 'region-green' }
];
const markers = [
    { num: 1, text: 'proigr 2', start: 0, end: 2, cls: 'blue' },
    { num: 2, text: 'kup', start: 2, end: 18, cls: 'orange' },
    { num: 4, text: 'bridge', start: 18, end: 26, cls: 'yellow' },
    { num: 5, text: 'prip 1', start: 26, end: 30, cls: 'lime' }
];

function barX(n) {
    return Math.round(n * BAR);
}
function barWidth(item) {
    return barX(item.end) - barX(item.start);
}

document.querySelector('#regions').innerHTML = regions.map(r =>
    `<div class="region ${r.cls}" style="width:${barWidth(r)}px">${r.text}</div>`).join('');

document.querySelector('#markers').innerHTML = markers.map(m =>
    `<div class="marker" style="width:${barWidth(m)}px"><b class="${m.cls}">${m.num}</b>${m.text}</div>`).join('');

let bars = '';
for (let i = 0; i < BARS; i++) {
    bars += `<div class="bar" style="width:${barX(i + 1) - barX(i)}px">${i + 1}</div>`;
}
document.querySelector('#ruler').innerHTML = bars;

// all y values below are measured from the window top
function vline(x, y1, y2, color, extra) {
    return `<path d="M${x + 0.5} ${y1 - TOP}V${y2 - TOP}" stroke="${color}" ${extra || ''}/>`;
}
function hline(x1, x2, y, color, w) {
    return `<path d="M${x1} ${y - TOP + (w === 2 ? 0 : 0.5)}H${x2}" stroke="${color}" stroke-width="${w || 1}"/>`;
}

let g = '';
const bottom = 3000;
for (let i = 0; i < BARS * 4; i++) {
    const x = Math.round(i * BAR / 4);
    const isBar = i % 4 === 0;
    g += vline(x, isBar ? 80 : 102, 105, isBar ? '#b8b8b8' : '#777');
    g += vline(x, 105, 110, '#6a6a6a');
    g += vline(x, 110, 134, isBar ? '#666' : '#888', 'stroke-dasharray="1 1"');
    g += vline(x, 134, 204, isBar ? '#888' : '#b4b4b4', 'stroke-dasharray="1 1"');
    g += vline(x, 204, bottom, isBar ? '#666' : '#888', 'stroke-dasharray="1 1"');
}

// drum notes
for (let i = 0; i < BARS; i++) {
    const x = barX(i);
    const end = barX(i + 1);
    if (i % 2 === 0) {
        g += hline(x, end, 139, '#4a4a40');
        g += hline(x, end, 141, '#4a4a40');
    } else {
        g += hline(x, end, 141, '#4a4a40', 2);
    }
    g += hline(x, x + 5, 144, '#4a4a40');
    g += hline(x + 8, x + 20, 144, '#4a4a40');
    g += hline(x + 23, x + 30, 144, '#4a4a40');
}

// bass notes
const bass = [[0, 6, 167], [6, 7, 165], [7, 14, 167], [14, 15, 165], [15, 18, 167], [18, 20, 168], [20, 22, 167], [22, 26, 168], [26, 27, 167], [27, 27.5, 166], [27.5, 28, 165], [28, 28.5, 167], [28.5, 29, 165], [29, 29.5, 166], [29.5, 60, 167]];
bass.forEach(n => {
    g += hline(barX(n[0]), barX(n[1]), n[2], '#4c4c45');
});

// organ notes
for (let i = 0; i < 12; i += 2) {
    g += hline(barX(i), barX(i + 1) - 1, 188, '#777');
    g += hline(barX(i + 1), barX(i + 2) - 1, 187, '#777');
    g += hline(barX(i), barX(i + 1) + 16, 190, '#777');
}
const organ = [[385, 417, 187], [418, 449, 188], [385, 497, 190], [450, 481, 187], [482, 497, 188], [498, 545, 189], [514, 641, 187], [514, 706, 191], [674, 842, 187], [642, 770, 189], [771, 850, 190], [843, 850, 188], [851, 906, 187], [851, 898, 191], [867, 882, 189], [899, 930, 190], [907, 973, 188]];
organ.forEach(n => {
    g += hline(n[0], n[1], n[2], '#777');
});
g += hline(0, 3000, 192, '#8e1a1a');

g += '<path d="M0 62h10L0 72z" fill="#b4b4b4"/>';
g += vline(0, 53, 105, '#3399ff');
g += vline(barX(2), 52, bottom, '#f08018');
g += vline(barX(18), 52, 109, '#ffff80');
g += vline(barX(18), 109, bottom, '#f08018');
g += vline(barX(26), 52, bottom, '#00c800');

// edit cursor
g += vline(48, 84, bottom, '#3c1010');
g += '<path d="M41 39.500h15l-7.500 8z" fill="#4c2020" stroke="#fff"/>';
document.querySelector('#grid').innerHTML = g;

const row = last => `
    <div class="lane-row">
        <svg class="lane-knob" viewBox="0 0 20 20"><use href="#knob"/></svg>
        <svg viewBox="0 0 14 14"><use href="#lock"/></svg>
        <span>M</span>
        <svg viewBox="0 0 14 14"><use href="#bubble"/></svg>
        <span>i</span>
        <span>FX</span>
        <svg class="${last}" viewBox="0 0 14 14"><use href="#env"/></svg>
    </div>`;
document.querySelector('#laneTools').innerHTML = row('') + row('') + row('lane-env');
```
